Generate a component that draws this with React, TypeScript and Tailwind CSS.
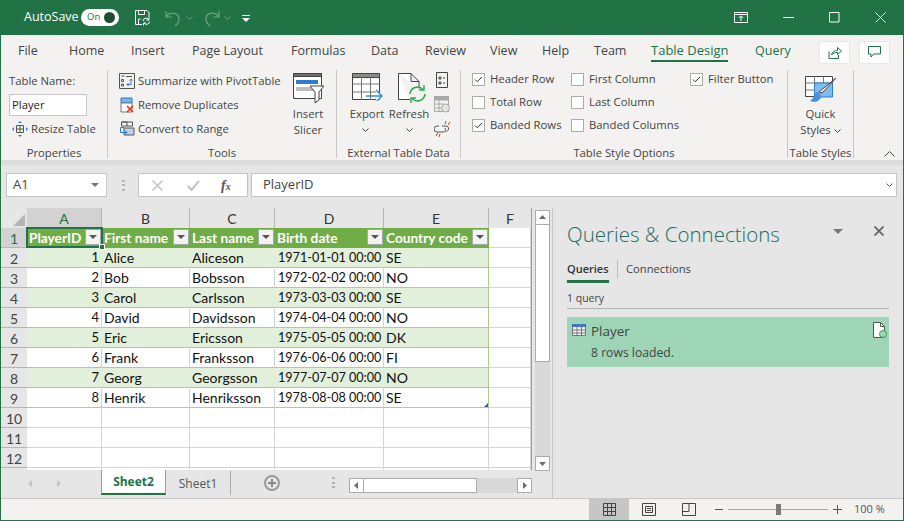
import { FC, ReactNode } from 'react';

const ui = "font-['Open_Sans',sans-serif]";
const cellFont = "font-['Lato',sans-serif]";

const tabs: [string, string][] = [
  ['File', 'w-[51px]'], ['Home', 'w-[62px]'], ['Insert', 'w-[61px]'], ['Page Layout', 'w-[99px]'],
  ['Formulas', 'w-[80px]'], ['Data', 'w-[54px]'], ['Review', 'w-[65px]'], ['View', 'w-[52px]'],
  ['Help', 'w-[52px]'], ['Team', 'w-[57px]'],
];

const rows = [
  ['1', 'Alice', 'Aliceson', '1971-01-01 00:00', 'SE'],
  ['2', 'Bob', 'Bobsson', '1972-02-02 00:00', 'NO'],
  ['3', 'Carol', 'Carlsson', '1973-03-03 00:00', 'SE'],
  ['4', 'David', 'Davidsson', '1974-04-04 00:00', 'NO'],
  ['5', 'Eric', 'Ericsson', '1975-05-05 00:00', 'DK'],
  ['6', 'Frank', 'Franksson', '1976-06-06 00:00', 'FI'],
  ['7', 'Georg', 'Georgsson', '1977-07-07 00:00', 'NO'],
  ['8', 'Henrik', 'Henriksson', '1978-08-08 00:00', 'SE'],
];

const Chevron: FC<{ className?: string }> = ({ className }) => (
  <svg width="7" height="4" viewBox="0 0 7 4" className={className} fill="none" stroke="currentColor">
    <path d="M.5.5l3 3 3-3" />
  </svg>
);

const Check: FC<{ label: string; on?: boolean; w: string }> = ({ label, on, w }) => (
  <div className={`flex items-center h-[23px] ${w}`}>
    <span className="w-[13px] h-[13px] bg-white border border-[#ababab] flex items-center justify-center shrink-0">
      {on && (
        <svg width="9" height="7" viewBox="0 0 9 7" fill="none" stroke="#333">
          <path d="M1 3.5l2.2 2.2L8 1" />
        </svg>
      )}
    </span>
    <span className="ml-[5px] whitespace-nowrap">{label}</span>
  </div>
);

const GroupLabel: FC<{ children: ReactNode }> = ({ children }) => (
  <div className="absolute left-0 right-0 top-[76px] text-center whitespace-nowrap">{children}</div>
);

const Sep = () => <div className="w-px h-[88px] mt-[1px] bg-[#c6c6c6] shrink-0" />;

const FilterBtn = () => (
  <span className="absolute right-[1px] top-[1px] w-[16px] h-[16px] bg-[#f3f3f3] border border-[#a8a8a8] flex items-center justify-center">
    <svg width="8" height="4" viewBox="0 0 8 4"><path d="M0 0h8L4 4z" fill="#555" /></svg>
  </span>
);

const SmallScrollBtn: FC<{ d: string; className?: string }> = ({ d, className }) => (
  <span className={`w-[15px] h-[15px] bg-white border border-[#ababab] flex items-center justify-center shrink-0 ${className ?? ''}`}>
    <svg width="9" height="9" viewBox="0 0 9 9"><path d={d} fill="#6a6a6a" /></svg>
  </span>
);

const TitleBar = () => (
  <div className="h-[35px] shrink-0 bg-[#217346] flex items-center text-white text-[12.5px] pl-[23px]">
    <span className="w-[57px]">AutoSave</span>
    <span className="w-[38px] h-[17px] rounded-full bg-white flex items-center justify-between px-[4px] text-[#217346] text-[9.5px]">
      <span className="ml-[2px]">On</span>
      <span className="w-[11px] h-[11px] rounded-full bg-[#1e4d33]" />
    </span>
    <svg width="17" height="17" viewBox="0 0 17 17" className="ml-[15px]" fill="none" stroke="#fff">
      <path d="M8 15.5H1.5v-14h11.5l2 2v5" />
      <path d="M4.5 1.5v4h6v-4M4.5 15v-5h2" />
      <path d="M9 12a3 3 0 0 1 5.5-1.5M15.5 12.5a3 3 0 0 1-5.5 1.5" />
      <path d="M15 8.5v2.5h-2.5M9.5 16.5v-2.5h2.5" />
    </svg>
    <svg width="16" height="18" viewBox="0 0 16 18" className="ml-[14px]" fill="none" stroke="#6ba488" strokeWidth="1.2">
      <path d="M1 2v6h6M1.5 8c2-4.500 8-5 11-2 3 3 1.500 8-2.500 11" />
    </svg>
    <Chevron className="ml-[5px] text-[#6ba488]" />
    <svg width="16" height="18" viewBox="0 0 16 18" className="ml-[11px]" fill="none" stroke="#6ba488" strokeWidth="1.2">
      <path d="M15 2v6H9M14.500 8c-2-4.500-8-5-11-2-3 3-1.500 8 2.500 11" />
    </svg>
    <Chevron className="ml-[4px] text-[#6ba488]" />
    <svg width="8" height="7" viewBox="0 0 8 7" className="ml-[11px] mt-[2px]" fill="#fff">
      <path d="M0 0h8v1H0zM0 3h8L4 7z" />
    </svg>
    <div className="ml-auto flex items-center">
      <svg width="14" height="11" viewBox="0 0 14 11" fill="none" stroke="#fff">
        <path d="M.5.5h13v10H.5zM.5 2.500h13M7 9V4M4.800 6L7 3.800 9.200 6" />
      </svg>
      <svg width="11" height="1" viewBox="0 0 11 1" className="ml-[35px]"><path d="M0 0h11v1H0z" fill="#fff" /></svg>
      <svg width="11" height="11" viewBox="0 0 11 11" className="ml-[35px]" fill="none" stroke="#fff"><path d="M.5.5h9.500v9.500H.5z" /></svg>
      <svg width="11" height="11" viewBox="0 0 11 11" className="ml-[35px] mr-[17px]" fill="none" stroke="#fff"><path d="M.5.5l10 10M10.500.5l-10 10" /></svg>
    </div>
  </div>
);

const TabRow = () => (
  <div className="h-[34px] shrink-0 bg-[#f3f2f1] flex items-center text-[12.5px] text-[#444] pl-[17px] pb-[2px]">
    {tabs.map(([label, w]) => <span key={label} className={`${w} whitespace-nowrap`}>{label}</span>)}
    <span className="w-[104px] h-[32px] relative flex items-center text-[#217346] text-[13px] font-medium whitespace-nowrap">
      Table Design
      <span className="absolute left-0 w-[77px] top-[25px] h-[2px] bg-[#217346]" />
    </span>
    <span className="w-[64px] text-[#217346]">Query</span>
    <span className="w-[31px] h-[23px] mt-[2px] bg-white rounded-[2px] border border-[#e8e8e8] flex items-center justify-center">
      <svg width="14" height="13" viewBox="0 0 14 13" fill="none" stroke="#217346">
        <path d="M1 5.500v7h9.500V9M3.500 9c.5-3 3-4.500 6-4.500V1.500L13.500 5l-4 3.500V6.500c-2.500 0-4.500.5-6 2.500z" />
      </svg>
    </span>
    <span className="ml-[9px] w-[31px] h-[23px] mt-[2px] bg-white rounded-[2px] border border-[#e8e8e8] flex items-center justify-center">
      <svg width="13" height="12" viewBox="0 0 13 12" fill="none" stroke="#217346">
        <path d="M.5.500h12v7.500H5.500L3 11V8H.5z" />
      </svg>
    </span>
  </div>
);

const Ribbon = () => (
  <div className="h-[91px] shrink-0 bg-[#f3f2f1] flex text-[#444] text-[11.3px] relative">
    {/* Properties */}
    <div className="relative w-[106px] pl-[8px]">
      <div className="h-[22px] mt-[1px] flex items-center">Table Name:</div>
      <div className="w-[78px] h-[22px] mt-[2px] bg-white border border-[#c6c6c6] pl-[2px] flex items-center text-[#222]">Player</div>
      <div className="flex items-center mt-[2px] h-[22px]">
        <svg width="16" height="16" viewBox="0 0 16 16" className="ml-[3px]" fill="none">
          <path d="M4.500 4.500h7v7h-7zM4.500 8h7M8 4.500v7" stroke="#555" />
          <path d="M8 0l2 2H6zM8 16l2-2H6zM0 8l2-2v4zM16 8l-2-2v4z" fill="#2b7cd3" />
        </svg>
        <span className="ml-[3px] whitespace-nowrap">Resize Table</span>
      </div>
      <GroupLabel>Properties</GroupLabel>
    </div>
    <Sep />
    {/* Tools */}
    <div className="relative w-[228px] pl-[11px]">
      <div className="flex items-center h-[24px]">
        <svg width="16" height="16" viewBox="0 0 16 16" fill="none">
          <path d="M.5.500h15v15H.5z" stroke="#555" />
          <path d="M2.500 3h3M2.500 6.500h2v2h-2zM2.500 11h2v2h-2zM7 3.500h6" stroke="#555" />
          <path d="M12 6v5.500H8M9.500 10L8 11.500 9.500 13M10.500 7.500L12 6l1.500 1.500" stroke="#2b7cd3" />
        </svg>
        <span className="ml-[3px] whitespace-nowrap">Summarize with PivotTable</span>
      </div>
      <div className="flex items-center h-[24px]">
        <svg width="16" height="17" viewBox="0 0 16 17" fill="none">
          <path d="M2 1h11v5H2z" fill="#7fb2e5" stroke="#2b7cd3" />
          <path d="M2 6h11v9H2z" fill="#fff" stroke="#777" />
          <path d="M8 9l6 6M14 9l-6 6" stroke="#e0301e" strokeWidth="1.5" />
        </svg>
        <span className="ml-[3px] whitespace-nowrap">Remove Duplicates</span>
      </div>
      <div className="flex items-center h-[24px]">
        <svg width="16" height="16" viewBox="0 0 16 16" fill="none">
          <path d="M2.500 1h11v4h-11zM2.500 1h5.500v4" stroke="#555" />
          <path d="M5 7h10v7H5z" fill="#b9d4ee" stroke="#555" />
          <path d="M5 6.500H1.500v5H8M6 9.500l2 2-2 2" stroke="#2b7cd3" />
        </svg>
        <span className="ml-[3px] whitespace-nowrap">Convert to Range</span>
      </div>
      <div className="absolute left-[185px] top-[4px] w-[30px] flex flex-col items-center">
        <svg width="31" height="31" viewBox="0 0 31 31" fill="none">
          <path d="M.5.500h28v25H.5z" fill="#fff" stroke="#444" />
          <path d="M.5.500h28v3H.5z" fill="#6d6d6d" stroke="#444" />
          <path d="M3 7h22v4H3z" fill="#2b7cd3" />
          <path d="M3 14h22v4H3z" fill="#bdbdbd" />
          <path d="M17 13h14l-5 6v8l-4 3v-11z" fill="#fff" stroke="#444" />
        </svg>
        <div className="mt-[2px] text-center leading-[16px] whitespace-nowrap">Insert<br />Slicer</div>
      </div>
      <GroupLabel>Tools</GroupLabel>
    </div>
    <Sep />
    {/* External Table Data */}
    <div className="relative w-[123px]">
      <div className="absolute left-[15px] top-[4px] w-[30px] flex flex-col items-center">
        <svg width="31" height="28" viewBox="0 0 31 28" fill="none">
          <path d="M.5.500h27v26H.5z" fill="#fff" stroke="#444" />
          <path d="M.5.500h27v4H.5z" fill="#8a8a8a" stroke="#444" />
          <path d="M9.500 4v23M18.500 4v23M.5 11h27M.5 19h27" stroke="#777" />
          <path d="M14 23h16M24 17l6 6-6 6" stroke="#2b8fe0" strokeWidth="1.4" fill="#fff" />
        </svg>
        <div className="mt-[5px] whitespace-nowrap leading-[16px]">Export</div>
        <Chevron className="mt-[6px] -translate-x-[2px] text-[#444]" />
      </div>
      <div className="absolute left-[61px] top-[4px] w-[30px] flex flex-col items-center">
        <svg width="30" height="30" viewBox="0 0 30 30" fill="none">
          <path d="M.5.500H13l8 8v7M13 .5v8h8M.5.500v26H12" fill="#fff" stroke="#444" />
          <path d="M12 21a7.500 7.500 0 0 1 13-4.500M27 21a7.500 7.500 0 0 1-13 4.500" stroke="#2ea84f" strokeWidth="1.6" />
          <path d="M26 12v5h-5M13 30v-5h5" stroke="#2ea84f" strokeWidth="1.4" />
        </svg>
        <div className="mt-[3px] -translate-x-[4px] whitespace-nowrap leading-[16px]">Refresh</div>
        <Chevron className="mt-[6px] -translate-x-[4px] text-[#444]" />
      </div>
      <svg width="12" height="16" viewBox="0 0 12 16" className="absolute left-[99px] top-[3px]" fill="none" stroke="#444">
        <path d="M.5.500h11v15H.5zM3 5h2v2H3zM3 10h2v2H3zM7 6h2M7 11h2" />
      </svg>
      <svg width="16" height="17" viewBox="0 0 16 17" className="absolute left-[97px] top-[27px]" fill="none" stroke="#a8a8a8">
        <path d="M.5.500h14v15H.5zM.5 4h14M.5 8h9M.5 12h8M5 4v11" />
        <path d="M.5.500h14v3H.5z" fill="#a8a8a8" />
        <circle cx="11.500" cy="12" r="4" fill="#e4e4e4" />
      </svg>
      <svg width="17" height="16" viewBox="0 0 17 16" className="absolute left-[97px] top-[52px]" fill="none">
        <path d="M5 5H3a2.500 2.500 0 0 0 0 6h6a2.500 2.500 0 0 0 2-4M8 5h4a2.500 2.500 0 0 1 2.500 3c-.2 1.500-1.500 2.500-3 3" stroke="#555" />
        <path d="M12 0l-1 3M16 1l-2 3M2 15l2-3M5 16l1-3" stroke="#e0301e" />
      </svg>
      <GroupLabel>External Table Data</GroupLabel>
    </div>
    <Sep />
    {/* Table Style Options */}
    <div className="relative w-[326px] pl-[11px] flex">
      <div className="w-[99px] -mt-[1px]">
        <Check label="Header Row" on w="w-full" />
        <Check label="Total Row" w="w-full" />
        <Check label="Banded Rows" on w="w-full" />
      </div>
      <div className="w-[119px] -mt-[1px]">
        <Check label="First Column" w="w-full" />
        <Check label="Last Column" w="w-full" />
        <Check label="Banded Columns" w="w-full" />
      </div>
      <div className="-mt-[1px]">
        <Check label="Filter Button" on w="w-full" />
      </div>
      <GroupLabel>Table Style Options</GroupLabel>
    </div>
    <Sep />
    {/* Table Styles */}
    <div className="relative w-[65px]">
      <div className="flex flex-col items-center pt-[7px]">
        <svg width="32" height="28" viewBox="0 0 32 28" fill="none">
          <path d="M.5.500h27v20H.5z" fill="#fff" stroke="#444" />
          <path d="M9.500.5v20M18.500.5v20M.5 7h27M.5 14h27" stroke="#777" />
          <path d="M9.500 7h18v14h-18z" fill="#7fbaf0" stroke="#2b7cd3" />
          <path d="M31 2L17 17l-3-1z" fill="#fff" stroke="#444" />
          <path d="M13 16c-4 0-3 6-8 9 5 2 11 0 11-5z" fill="#4a90d9" />
        </svg>
        <div className="mt-[2px] text-center leading-[16px] whitespace-nowrap">Quick<br />Styles <Chevron className="inline-block align-middle" /></div>
      </div>
      <GroupLabel>Table Styles</GroupLabel>
    </div>
    <Sep />
    <svg width="11" height="6" viewBox="0 0 11 6" className="absolute right-[8px] top-[82px]" fill="none" stroke="#444"><path d="M.5 5.500l5-5 5 5" /></svg>
  </div>
);

const FormulaBar = () => (
  <div className="h-[40px] shrink-0 flex items-center text-[13px] text-[#444] pl-[5px] pr-[6px]">
    <div className="w-[101px] h-[24px] bg-white border border-[#c6c6c6] flex items-center justify-between pl-[6px] pr-[7px]">
      A1
      <svg width="8" height="4" viewBox="0 0 8 4"><path d="M0 0h8L4 4z" fill="#777" /></svg>
    </div>
    <div className="ml-[15px] w-[3px] h-[11px] flex flex-col justify-between">
      <span className="h-[2px] bg-[#b4b4b4]" /><span className="h-[2px] bg-[#b4b4b4]" /><span className="h-[2px] bg-[#b4b4b4]" />
    </div>
    <div className="ml-[13px] w-[110px] h-[24px] bg-white border border-[#c6c6c6] flex items-center">
      <svg width="11" height="11" viewBox="0 0 11 11" className="ml-[13px]" fill="none" stroke="#c2c2c2" strokeWidth="1.500"><path d="M.5.5l10 10M10.500.5l-10 10" /></svg>
      <svg width="13" height="11" viewBox="0 0 13 11" className="ml-[24px]" fill="none" stroke="#c2c2c2" strokeWidth="2"><path d="M1 6l3.500 4L12 1" /></svg>
      <i className="ml-[21px] text-[14px] text-[#555] font-['Liberation_Serif',serif] font-bold">f<span className="text-[10px]">x</span></i>
    </div>
    <div className="ml-[3px] flex-1 h-[24px] bg-white border border-[#c6c6c6] flex items-center justify-between pl-[11px] pr-[3px]">
      PlayerID
      <Chevron className="text-[#555]" />
    </div>
  </div>
);

const Grid = () => {
  const head = 'h-[20px] bg-[#e6e6e6] border-r border-[#b5b5b5] flex items-center justify-center text-[14px] text-[#333] pt-[1px]';
  const rowHead = 'h-[20px] bg-[#e6e6e6] border-b border-[#b5b5b5] flex items-center justify-center text-[14px] text-[#444] pt-[1px]';
  const blank = 'h-[20px] bg-white border-r border-b border-[#d4d4d4]';
  return (
    <div className={`relative grid grid-cols-[26px_75px_88px_85px_109px_105px_42px] auto-rows-[20px] h-[262px] overflow-hidden border-r border-[#9c9c9c] ${cellFont}`}>
      <div className="h-[20px] bg-[#e6e6e6] relative">
        <svg width="12" height="12" viewBox="0 0 12 12" className="absolute right-[2px] bottom-[2px]"><path d="M12 0v12H0z" fill="#b5b5b5" /></svg>
      </div>
      <div className={`${head} !bg-[#d2d2d2] text-[#217346]`}>A</div>
      {['B', 'C', 'D', 'E', 'F'].map(c => <div key={c} className={c === 'F' ? `${head} border-r-0` : head}>{c}</div>)}

      <div className={`${rowHead} !bg-[#d2d2d2] text-[#217346]`}>1</div>
      {['PlayerID', 'First name', 'Last name', 'Birth date', 'Country code'].map(h => (
        <div key={h} className="relative h-[20px] bg-[#70ad47] text-white font-bold text-[13.7px] pl-[2px] flex items-center whitespace-nowrap overflow-hidden">
          {h}
          <FilterBtn />
        </div>
      ))}
      <div className={blank} />

      {rows.map((r, i) => {
        const band = i % 2 === 0 ? 'bg-[#e2efda]' : 'bg-white';
        const base = `h-[20px] ${band} border-b border-[#a9d08e] flex items-center text-[14px] text-[#111] whitespace-nowrap overflow-hidden`;
        const vline = i % 2 ? 'border-r-[#d4d4d4]' : 'border-r-transparent';
        return (
          <div key={r[0]} className="contents">
            <div className={rowHead}>{i + 2}</div>
            <div className={`${base} !text-[13px] justify-end pr-[2px] pt-[1px] border-r ${vline}`}>{r[0]}</div>
            <div className={`${base} pl-[2px] border-r ${vline}`}>{r[1]}</div>
            <div className={`${base} pl-[2px] border-r ${vline}`}>{r[2]}</div>
            <div className={`${base} !text-[12.6px] pl-[3px] pt-[1px] border-r ${vline}`}>{r[3]}</div>
            <div className={`${base} pl-[2px] border-r border-r-[#a9d08e] relative`}>
              {r[4]}
              {i === 7 && <svg width="4" height="4" viewBox="0 0 4 4" className="absolute right-0 bottom-0"><path d="M4 0v4H0z" fill="#3f51b5" /></svg>}
            </div>
            <div className={blank} />
          </div>
        );
      })}

      {[10, 11, 12, 13].map(n => (
        <div key={n} className="contents">
          <div className={rowHead}>{n < 13 ? n : ''}</div>
          {[0, 1, 2, 3, 4, 5].map(c => <div key={c} className={blank} />)}
        </div>
      ))}

      {/* selected cell outline */}
      <div className="absolute left-[25px] top-[19px] w-[77px] h-[21px] border-2 border-[#217346]" />
      <div className="absolute left-[98px] top-[36px] w-[4px] h-[4px] bg-[#217346] border border-white box-content" />
    </div>
  );
};

const VScroll = () => (
  <div className="w-[15px] ml-[3px] mt-[2px] h-[261px] bg-[#d9d9d9] flex flex-col">
    <SmallScrollBtn d="M4.500 2L8 6H1z" />
    <div className="h-[137px] bg-white border-x border-b border-[#ababab]" />
    <SmallScrollBtn d="M4.500 7L1 3h7z" className="mt-auto" />
  </div>
);

const SheetTabs = () => (
  <div className={`h-[28px] shrink-0 flex items-start ${ui} text-[12px]`}>
    <div className="w-[100px] h-[25px] flex items-center pl-[25px] gap-[21px]">
      <svg width="8" height="9" viewBox="0 0 8 9"><path d="M6 1L2 4.500 6 8z" fill="#c2c2c2" /></svg>
      <svg width="8" height="9" viewBox="0 0 8 9"><path d="M2 1l4 3.500L2 8z" fill="#c2c2c2" /></svg>
    </div>
    <div className="w-[65px] h-[25px] pt-[1px] bg-white border-x border-[#9c9c9c] border-b-2 border-b-[#217346] -mt-px flex items-center justify-center text-[#217346] font-bold">Sheet2</div>
    <div className="w-[65px] h-[24px] pt-[1px] flex items-center justify-center text-[#555] border-r border-[#ababab]">Sheet1</div>
    <div className="ml-[33px] mt-[4px] w-[16px] h-[16px] rounded-full border-2 border-[#9a9a9a] flex items-center justify-center">
      <svg width="8" height="8" viewBox="0 0 8 8"><path d="M3 0h2v8H3zM0 3h8v2H0z" fill="#8a8a8a" /></svg>
    </div>
    <div className="ml-[52px] mt-[6px] w-[3px] h-[11px] flex flex-col justify-between">
      <span className="h-[2px] bg-[#b4b4b4]" /><span className="h-[2px] bg-[#b4b4b4]" /><span className="h-[2px] bg-[#b4b4b4]" />
    </div>
    <div className="ml-[14px] mt-[7px] w-[183px] h-[15px] bg-[#d9d9d9] flex">
      <SmallScrollBtn d="M2 4.500L6 1v7z" />
      <div className="w-[113px] h-[15px] bg-white border-y border-r border-[#ababab]" />
      <SmallScrollBtn d="M7 4.500L3 1v7z" className="ml-auto" />
    </div>
  </div>
);

const Panel = () => (
  <div className={`flex-1 pl-[14px] pr-[14px] relative ${ui}`}>
    <div className="mt-[13px] h-[32px] flex items-center text-[20.5px] font-light text-[#1e6b63] whitespace-nowrap">Queries &amp; Connections</div>
    <svg width="10" height="5" viewBox="0 0 10 5" className="absolute left-[280px] top-[24px]"><path d="M0 0h10L5 5z" fill="#777" /></svg>
    <svg width="10" height="10" viewBox="0 0 10 10" className="absolute left-[321px] top-[21px]" fill="none" stroke="#666" strokeWidth="1.800"><path d="M.5.5l9 9M9.500.5l-9 9" /></svg>
    <div className="mt-[8px] flex items-start text-[#444]">
      <div className="w-[42px]">
        <div className="h-[22px] flex items-center font-semibold text-[#333] text-[11px]">Queries</div>
        <div className="h-[3px] bg-[#217346]" />
      </div>
      <div className="ml-[8px] mt-[2px] w-px h-[18px] bg-[#b9b9b9]" />
      <div className="ml-[8px] h-[22px] flex items-center text-[11.2px]">Connections</div>
    </div>
    <div className="mt-[6px] h-[20px] pt-[1px] flex items-center text-[10.5px] text-[#444] border-b border-[#b4b4b4]">1 query</div>
    <div className="mt-[8px] h-[50px] bg-[#9fd5b7] relative text-[#444]">
      <svg width="14" height="12" viewBox="0 0 14 12" className="absolute left-[5px] top-[7px]" fill="none">
        <path d="M.5.500h13v11H.5z" fill="#f2f2f2" stroke="#777" />
        <path d="M0 0h14v3H0z" fill="#4472c4" />
        <path d="M5 3v8M9.500 3v8M.5 6h13M.5 9h13" stroke="#777" />
      </svg>
      <div className="absolute left-[24px] top-[4px] text-[13.5px] whitespace-nowrap">Player</div>
      <div className="absolute left-[24px] top-[27px] text-[12.2px] whitespace-nowrap">8 rows loaded.</div>
      <svg width="14" height="16" viewBox="0 0 14 16" className="absolute right-[2px] top-[5px]" fill="none">
        <path d="M.5.500h7l4 4v11h-11z" fill="#fff" stroke="#555" />
        <path d="M7.500.5v4h4" stroke="#555" />
        <circle cx="10" cy="12" r="3.500" fill="#9fd5b7" stroke="#3f9a63" />
      </svg>
    </div>
  </div>
);

const StatusBar = () => (
  <div className={`h-[22px] shrink-0 bg-[#f3f2f1] border-t border-[#c6c6c6] flex items-center ${ui} text-[11px] text-[#555] pl-[588px]`}>
    <div className="w-[40px] h-full bg-[#c6c6c6] flex items-center justify-center">
      <svg width="13" height="13" viewBox="0 0 13 13" fill="none" stroke="#444"><path d="M.5.500h12v12H.5zM4.500.5v12M8.500.5v12M.5 4.500h12M.5 8.500h12" /></svg>
    </div>
    <div className="w-[40px] h-full flex items-center justify-center">
      <svg width="14" height="13" viewBox="0 0 14 13" fill="none" stroke="#444"><path d="M.5.500h13v12H.5zM3.500 3.500h7v6h-7zM5 5.500h4M5 7.500h4" /></svg>
    </div>
    <div className="w-[40px] h-full flex items-center justify-center">
      <svg width="14" height="13" viewBox="0 0 14 13" fill="none" stroke="#444"><path d="M.5.500h13v12H.5zM.5 8.500h6.500V.5" /></svg>
    </div>
    <svg width="8" height="1" viewBox="0 0 8 1" className="ml-[6px]"><path d="M0 0h8v1H0z" fill="#555" /></svg>
    <div className="ml-[5px] w-[100px] h-[1px] bg-[#a8a8a8] relative">
      <span className="absolute left-[48px] -top-[5px] w-[5px] h-[11px] bg-[#7a7a7a]" />
    </div>
    <svg width="9" height="9" viewBox="0 0 9 9" className="ml-[5px]"><path d="M4 0h1v9H4zM0 4h9v1H0z" fill="#555" /></svg>
    <span className="ml-[12px] pb-[1px] whitespace-nowrap">100 %</span>
  </div>
);

export default function App() {
  return (
    <div className={`w-[904px] h-[521px] overflow-hidden flex flex-col border-x border-b border-[#217346] bg-[#e6e6e6] ${ui}`}>
      <TitleBar />
      <TabRow />
      <Ribbon />
      <div className="h-[5px] shrink-0 bg-[#dcdcdc]" />
      <FormulaBar />
      <div className="flex flex-1 min-h-0">
        <div className="w-[552px] shrink-0 flex flex-col border-r border-[#c6c6c6] mt-[3px]">
          <div className="flex">
            <div className="w-[531px]"><Grid /></div>
            <VScroll />
          </div>
          <SheetTabs />
        </div>
        <Panel />
      </div>
      <StatusBar />
    </div>
  );
}
